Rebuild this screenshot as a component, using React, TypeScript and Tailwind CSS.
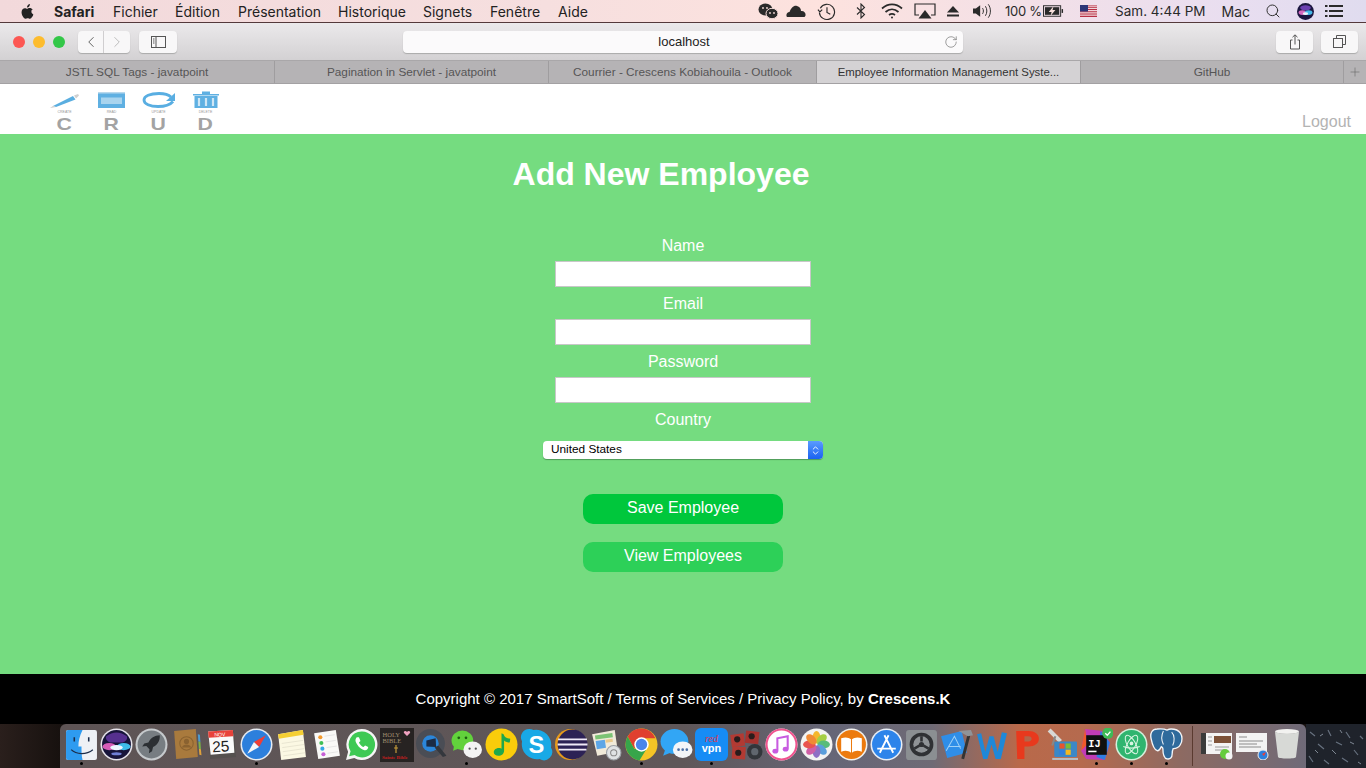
import type { ReactNode } from 'react';
import { ChevronLeft, ChevronRight, ChevronsUpDown, Plus, RotateCw, Search } from 'lucide-react';

const menus = [
  { label: 'Fichier', width: 'w-[62px]' },
  { label: 'Édition', width: 'w-[63px]' },
  { label: 'Présentation', width: 'w-[100px]' },
  { label: 'Historique', width: 'w-[85px]' },
  { label: 'Signets', width: 'w-[67px]' },
  { label: 'Fenêtre', width: 'w-[68px]' },
  { label: 'Aide', width: 'w-[40px]' },
];

const tabs = [
  { title: 'JSTL SQL Tags - javatpoint', width: 'w-[275px]' },
  { title: 'Pagination in Servlet - javatpoint', width: 'w-[274px]' },
  { title: 'Courrier - Crescens Kobiahouila - Outlook', width: 'w-[268px]' },
  { title: 'Employee Information Management Syste...', width: 'w-[264px]', active: true },
  { title: 'GitHub', width: 'w-[263px]' },
];

const Ico = ({ children }: { children: ReactNode }) => (
  <svg viewBox="0 0 32 32" className="w-[33px] h-[33px]">{children}</svg>
);

const Apple = () => (
  <svg viewBox="0 0 14 16" className="w-[13px] h-[15px] fill-[#222]">
    <path d="M9.6 0c.1 1-.3 1.9-.8 2.6-.6.7-1.4 1.2-2.3 1.1-.1-.9.3-1.9.8-2.5C7.9.5 8.9.1 9.6 0zM12.7 5.4c-.9.6-1.5 1.5-1.5 2.7 0 1.4.8 2.4 2.1 3-.3 1-.8 2-1.4 2.9-.6.9-1.3 1.8-2.3 1.8-.9 0-1.3-.6-2.4-.6s-1.5.6-2.4.6c-1 0-1.7-.9-2.4-1.9C1.3 12.5.6 10.5.6 8.7c0-2.8 1.800-4.300 3.600-4.300 1 0 1.800.7 2.400.7.600 0 1.500-.8 2.700-.8.800 0 2.400.2 3.400 2.100z" />
  </svg>
);

const StatusIcons = () => (
  <div className="flex items-center h-full">
    <svg viewBox="0 0 20 16" className="ml-[7px] w-[20px] h-[16px] fill-[#2a2a2a]">
      <ellipse cx="7.5" cy="6.5" rx="7" ry="6" />
      <ellipse cx="14" cy="10.5" rx="6" ry="5.2" stroke="#f8dedc" />
      <circle cx="12" cy="10" r=".9" fill="#f8dedc" /><circle cx="16" cy="10" r=".9" fill="#f8dedc" />
      <circle cx="5" cy="5" r=".9" fill="#f8dedc" /><circle cx="9" cy="5" r=".9" fill="#f8dedc" />
    </svg>
    <svg viewBox="0 0 20 14" className="ml-[8px] w-[20px] h-[14px] fill-[#2a2a2a]">
      <path d="M1 13c-1.500-2 0-5 2.500-5C5 4 8 1 11 2c2.500.5 4 2.500 4 5 3-.5 5 2 4.500 4.500-.2.9-.8 1.500-1.500 1.500z" />
    </svg>
    <svg viewBox="0 0 20 20" className="ml-[11px] w-[19px] h-[19px] fill-none stroke-[#2a2a2a] stroke-[1.2]">
      <path d="M3.5 6.5a8 8 0 1 1-1 4.500" /><path d="M1 8l2 2.500L5.500 8" /><path d="M10.500 5.500V11l3.500 2" />
    </svg>
    <svg viewBox="0 0 10 16" className="ml-[20px] w-[10px] h-[16px] fill-none stroke-[#2a2a2a] stroke-[1.1]">
      <path d="M1 4.500l7.500 7L5 15V1l3.500 3.500L1 11.500" />
    </svg>
    <svg viewBox="0 0 22 16" className="ml-[15px] w-[22px] h-[16px] fill-none stroke-[#2a2a2a] stroke-[1.7]">
      <path d="M1 5.500c6-5.500 14-5.500 20 0" /><path d="M4.500 9c4-3.500 9-3.500 13 0" /><path d="M8 12c2-1.500 4-1.500 6 0" />
      <circle cx="11" cy="14.5" r="1" fill="#2a2a2a" stroke="none" />
    </svg>
    <svg viewBox="0 0 22 16" className="ml-[11px] w-[22px] h-[16px]">
      <path d="M5 12H1V1h20v11h-4" fill="none" stroke="#2a2a2a" strokeWidth="1.2" />
      <path d="M11 7l6.500 8.500h-13z" fill="#2a2a2a" />
    </svg>
    <svg viewBox="0 0 12 11" className="ml-[11px] w-[12px] h-[11px] fill-[#2a2a2a]">
      <path d="M6 0l6 6.500H0z" /><rect y="8.5" width="12" height="2" />
    </svg>
    <svg viewBox="0 0 22 16" className="ml-[14px] w-[21px] h-[16px] fill-none stroke-[#2a2a2a]">
      <path d="M0 5.500h3L7.500 2v12L3 10.500H0z" fill="#2a2a2a" stroke="none" />
      <path d="M10 5c1.200 1.800 1.200 4.200 0 6" /><path d="M13 3c2 3 2 7 0 10" /><path d="M16 1c3 4 3 10 0 14" />
    </svg>
    <span className="ml-[11px] pt-[1px] w-[38px] text-[13px] text-[#2a2a2a] whitespace-nowrap tracking-[-0.3px]">100 %</span>
    <svg viewBox="0 0 22 12" className="w-[21px] h-[12px]">
      <rect x=".5" y=".5" width="18" height="11" fill="none" stroke="#2a2a2a" />
      <rect x="2" y="2" width="15" height="8" fill="#2a2a2a" />
      <rect x="19.5" y="4" width="1.5" height="4" fill="#2a2a2a" />
      <path d="M11 1L6 7h3l-1 4 5-6h-3z" fill="#f8e0dc" />
    </svg>
    <svg viewBox="0 0 17 12" className="ml-[16px] w-[17px] h-[12px]">
      <rect width="17" height="12" fill="#fff" />
      <path d="M0 .9h17M0 2.7h17M0 4.5h17M0 6.3h17M0 8.1h17M0 9.9h17M0 11.5h17" stroke="#b3243a" strokeWidth=".95" />
      <rect width="8" height="6.5" fill="#2c3677" />
    </svg>
    <span className="ml-[18px] text-[13.500px] text-[#2a2a2a] whitespace-nowrap">Sam. 4:44 PM</span>
    <span className="ml-[16px] text-[14px] text-[#2a2a2a]">Mac</span>
    <Search className="ml-[15px] w-[16px] h-[16px] text-[#333]" strokeWidth={1.5} />
    <svg viewBox="0 0 16 16" className="ml-[16px] w-[17px] h-[17px]">
      <circle cx="8" cy="8" r="8" fill="#1b1640" />
      <ellipse cx="8" cy="4.5" rx="5" ry="2.5" fill="#6a3fb0" />
      <ellipse cx="5" cy="9" rx="3.5" ry="2.2" fill="#d56bc0" />
      <ellipse cx="11" cy="9" rx="3.5" ry="2.2" fill="#45b8e8" />
      <ellipse cx="8" cy="10" rx="2.5" ry="1.3" fill="#ecf6ff" />
    </svg>
    <svg viewBox="0 0 18 12" className="ml-[11px] mr-[23px] w-[18px] h-[12px] fill-[#2a2a2a]">
      <rect width="2.5" height="2" /><rect x="4" width="14" height="2" />
      <rect y="5" width="2.5" height="2" /><rect x="4" y="5" width="14" height="2" />
      <rect y="10" width="2.5" height="2" /><rect x="4" y="10" width="14" height="2" />
    </svg>
  </div>
);

const CrudLogo = () => {
  const items = [
    {
      letter: 'C', label: 'CREATE',
      icon: (
        <svg viewBox="0 0 32 16" className="w-[32px] h-[16px]">
          <path d="M4 14L24 4l2.500 3.500L7 15z" fill="#5aaee0" />
          <path d="M1 16l3-2 3 1z" fill="#c9c9c9" /><path d="M25 3.500l4-1.500 1 1.500-3 3z" fill="#cfcfcf" />
        </svg>
      ),
    },
    {
      letter: 'R', label: 'READ',
      icon: (
        <svg viewBox="0 0 28 16" className="w-[28px] h-[16px]">
          <rect y="1" width="27" height="15" fill="#5fb0e2" /><rect y="0" width="27" height="1.5" fill="#b9d8ec" />
          <rect x="3" y="5.5" width="21" height="6.5" fill="#a9d4ee" />
        </svg>
      ),
    },
    {
      letter: 'U', label: 'UPDATE',
      icon: (
        <svg viewBox="0 0 34 16" className="w-[34px] h-[16px] fill-none">
          <path d="M29 5C26 2 22 1.500 17 1.500 8 1.500 2 4 2 8c0 4 6 6.500 14 6.500 7 0 12-1.500 15-5" stroke="#59aee2" strokeWidth="2.8" />
          <path d="M33 1v8h-9z" fill="#59aee2" />
        </svg>
      ),
    },
    {
      letter: 'D', label: 'DELETE',
      icon: (
        <svg viewBox="0 0 26 17" className="w-[26px] h-[17px]">
          <path d="M0 3h26v1.500H0zM9 .5h8V3H9z" fill="#5fb0e2" />
          <rect x="1.5" y="5" width="23" height="12" fill="#5fb0e2" />
          <path d="M6 7v8M13 7v8M20 7v8" stroke="#cfe6f5" strokeWidth="2.2" />
        </svg>
      ),
    },
  ];
  return (
    <div className="flex ml-[41px] pt-[6px]">
      {items.map(item => (
        <div key={item.letter} className="w-[47px] flex flex-col items-center">
          <div className="h-[18px] flex items-end">{item.icon}</div>
          <span className="mt-[2px] h-[5px] text-[3.5px] leading-[5px] text-[#999]">{item.label}</span>
          <span className="mt-[1px] text-[17px] leading-[17px] font-bold text-[#a3a3a3] scale-x-[1.25]">{item.letter}</span>
        </div>
      ))}
    </div>
  );
};

const dockIcons: { key: string; dot?: boolean; icon: ReactNode }[] = [
  {
    key: 'finder', dot: true,
    icon: (
      <Ico>
        <rect x="1" y="2" width="30" height="29" rx="2" fill="#eef1f5" />
        <path d="M3 2h14c-3 6-4 11-4 16h3c0 5 0 9 1 13H3a2 2 0 0 1-2-2V4a2 2 0 0 1 2-2z" fill="#2e9bf0" />
        <path d="M9 9v4M23 9v4" stroke="#1c2d4a" strokeWidth="1.5" />
        <path d="M6 21c5 5 15 5 21 0" stroke="#1c2d4a" strokeWidth="1.2" fill="none" />
      </Ico>
    ),
  },
  {
    key: 'siri',
    icon: (
      <Ico>
        <circle cx="16" cy="16" r="15.5" fill="#e5e3ea" /><circle cx="16" cy="16" r="14" fill="#17143a" />
        <path d="M6 8c6-5 14-5 20 0 1 3-1 5-4 6H10C7 13 5 11 6 8z" fill="#56308f" />
        <ellipse cx="9" cy="18" rx="6.5" ry="3.5" fill="#d75cb8" /><ellipse cx="23" cy="18" rx="6.5" ry="3.5" fill="#3dbbe8" />
        <ellipse cx="16" cy="19" rx="6" ry="2.5" fill="#eef6ff" /><ellipse cx="16" cy="25" rx="5" ry="1.5" fill="#6f7fd6" />
      </Ico>
    ),
  },
  {
    key: 'launchpad',
    icon: (
      <Ico>
        <circle cx="16" cy="16" r="15.5" fill="#c6cacd" /><circle cx="16" cy="16" r="13.5" fill="#777d82" />
        <path d="M24 7c-5 0-9 3-11 7l-4 1-2 3 4-.5 3 3-.5 4 3-2 1-4c4-2 7-6 6.500-11.500z" fill="#2b2f33" />
      </Ico>
    ),
  },
  {
    key: 'contacts',
    icon: (
      <Ico>
        <path d="M4 3l21-2 2 27-21 2z" fill="#a97a3d" />
        <path d="M27 6l2 .5.500 7-2-.5z" fill="#4d9bd0" /><path d="M27.500 13l2 .5.500 7-2-.5z" fill="#79b34a" /><path d="M28 20l2 .5.500 6-2-.5z" fill="#e0a23c" />
        <circle cx="16" cy="15" r="6.5" fill="none" stroke="#8a6230" strokeWidth="1" />
        <circle cx="16" cy="13" r="2.5" fill="#8a6230" /><path d="M11.500 19c1-4 8-4 9 0z" fill="#8a6230" />
      </Ico>
    ),
  },
  {
    key: 'calendar',
    icon: (
      <Ico>
        <path d="M3 4l25-1 2 25-25 2z" fill="#55514f" />
        <path d="M3 3.500l24-1.500 1.500 22-23 2z" fill="#fafafa" />
        <path d="M3 3.500l24-1.500.500 6-24 1.500z" fill="#e8423a" />
        <text x="9" y="8" fontSize="5" fill="#fff" fontFamily="Liberation Sans, sans-serif" transform="rotate(-3 15 6)">NOV</text>
        <text x="7" y="23" fontSize="15" fill="#222" fontFamily="Liberation Sans, sans-serif" transform="rotate(-3 15 18)">25</text>
      </Ico>
    ),
  },
  {
    key: 'safari', dot: true,
    icon: (
      <Ico>
        <circle cx="16" cy="16" r="15.5" fill="#e6ebf2" /><circle cx="16" cy="16" r="14" fill="#2c7fdc" />
        <path d="M25 7L13.500 13.500 18.500 18.500z" fill="#ef3e36" /><path d="M7 25l11.500-6.500-5-5z" fill="#f5f6f8" />
      </Ico>
    ),
  },
  {
    key: 'notes',
    icon: (
      <Ico>
        <path d="M3 6l24-4 3 26-24 3z" fill="#fbf8e3" /><path d="M3 6l24-4 .700 4.500-24 4z" fill="#f5cf33" />
        <path d="M6.500 15l21-3M7 19l21-3M7.500 23l21-3M8 27l21-3" stroke="#ddd9c6" strokeWidth=".6" />
      </Ico>
    ),
  },
  {
    key: 'reminders',
    icon: (
      <Ico>
        <path d="M4 5l21-3 4 25-21 3z" fill="#f9f9f7" />
        <circle cx="10" cy="9" r="2" fill="#f39a2e" /><circle cx="11" cy="14.5" r="2" fill="#3fbe55" /><circle cx="12" cy="20" r="2" fill="#35a6e6" /><circle cx="13" cy="25.5" r="2" fill="#c75fd6" />
        <path d="M14 8l10-1.500M15 13.500l10-1.500M16 19l10-1.500M17 24.500l10-1.500" stroke="#ddd" strokeWidth=".7" />
      </Ico>
    ),
  },
  {
    key: 'whatsapp',
    icon: (
      <Ico>
        <path d="M16 1a15 15 0 0 0-13 22L1 31l8-2a15 15 0 1 0 7-28z" fill="#f5f6f5" />
        <path d="M16 3.500a12.500 12.500 0 0 0-10.600 19L4 27.500l5.300-1.400A12.500 12.500 0 1 0 16 3.500z" fill="#3ec954" />
        <path d="M11.500 9c-1.500 1.500-2 3.500 0 6.500 2 3.500 5 5.500 7.500 6 2 .3 3.500-1 3.500-3l-3-1.500-1.500 1.500c-2-.8-3.500-2.300-4.500-4.500l1.500-1.500L13.500 9z" fill="#fff" />
      </Ico>
    ),
  },
  {
    key: 'bible',
    icon: (
      <svg viewBox="0 0 34 34" className="w-[34px] h-[34px]">
        <rect width="34" height="34" fill="#272322" />
        <text x="2.5" y="9" fontSize="6.5" fill="#a08f6f" fontFamily="Liberation Serif, serif">HOLY</text>
        <text x="2.5" y="15" fontSize="6.5" fill="#a08f6f" fontFamily="Liberation Serif, serif">BIBLE</text>
        <path d="M27 8l-3-3c-1-2 2-3 3-1 1-2 4-1 3 1z" fill="#f0a2c0" />
        <path d="M16 17v8M14 20h4" stroke="#c49a3a" strokeWidth="1.2" />
        <text x="2" y="31" fontSize="5" fontWeight="bold" fill="#c51f1f" fontFamily="Liberation Serif, serif">Sainte Bible</text>
      </svg>
    ),
  },
  {
    key: 'quicktime',
    icon: (
      <Ico>
        <circle cx="15" cy="15" r="14" fill="#4a4d55" /><circle cx="15" cy="15" r="8" fill="#2b86d9" />
        <path d="M11 12l9-2 .5 8.500L11 18z" fill="#1b2c46" />
        <path d="M19 19l8 9 3.500-1-8-10z" fill="#34373d" />
      </Ico>
    ),
  },
  {
    key: 'wechat', dot: true,
    icon: (
      <Ico>
        <ellipse cx="12" cy="12" rx="10.5" ry="9.5" fill="#62d23c" />
        <path d="M4 17l-1 5 5-2z" fill="#62d23c" />
        <circle cx="8.5" cy="9.5" r="1.3" fill="#1e5f11" /><circle cx="15.5" cy="9.5" r="1.3" fill="#1e5f11" />
        <ellipse cx="22" cy="21" rx="9" ry="8" fill="#f4f4f4" />
        <circle cx="19" cy="20" r="1.1" fill="#555" /><circle cx="25" cy="20" r="1.1" fill="#555" />
      </Ico>
    ),
  },
  {
    key: 'qqmusic',
    icon: (
      <Ico>
        <circle cx="16" cy="16" r="15.5" fill="#f9cc0b" />
        <path d="M16 5l2 1c1 3 3 4 6.500 4.500l-.5 3.500c-2 0-4-.5-5.500-2v10c0 3-2.500 5-5.500 5-2.500 0-4.500-1.500-4.500-3.500 0-2.500 2.500-4 5-4 .8 0 1.500.1 2.500.5z" fill="#1fa84b" />
      </Ico>
    ),
  },
  {
    key: 'skype',
    icon: (
      <Ico>
        <path d="M9 1a8 8 0 0 0-7 12 14.500 14.500 0 0 0 17 17 8 8 0 0 0 11-11A14.500 14.500 0 0 0 13 2a8 8 0 0 0-4-1z" fill="#19a9e6" />
        <text x="16" y="24" textAnchor="middle" fontSize="23" fontWeight="bold" fill="#fff" fontFamily="Liberation Sans, sans-serif">S</text>
      </Ico>
    ),
  },
  {
    key: 'eclipse',
    icon: (
      <Ico>
        <circle cx="15" cy="16" r="15" fill="#e79a1b" /><circle cx="17" cy="16" r="14.5" fill="#2c2255" />
        <path d="M3 11h28M2.500 16h29M3.500 21h27" stroke="#efeaf8" strokeWidth="1.7" />
      </Ico>
    ),
  },
  {
    key: 'preview',
    icon: (
      <Ico>
        <path d="M2 6l22-4 3 21-20 4z" fill="#f0ead9" />
        <rect x="5" y="6" width="17" height="4" fill="#7cc374" transform="rotate(-8 14 8)" />
        <rect x="6" y="12" width="9" height="8" fill="#5ca6e6" transform="rotate(-8 10 16)" />
        <rect x="15" y="11" width="7" height="3" fill="#e8c98a" transform="rotate(-8 18 12)" />
        <circle cx="23" cy="24" r="7" fill="#dfe2e4" stroke="#9ba0a5" /><circle cx="23" cy="24" r="3" fill="none" stroke="#888" />
      </Ico>
    ),
  },
  {
    key: 'chrome', dot: true,
    icon: (
      <Ico>
        <circle cx="16" cy="16" r="15.5" fill="#f4c426" />
        <path d="M16 .5A15.500 15.500 0 0 0 2.600 8.300L9 20l7-10h13.500A15.500 15.500 0 0 0 16 .5z" fill="#e0402f" />
        <path d="M2.600 8.300A15.500 15.500 0 0 0 14 31.400L21 20l-12 0z" fill="#37a54a" />
        <circle cx="16" cy="16" r="7" fill="#fff" /><circle cx="16" cy="16" r="5.5" fill="#4a85ea" />
      </Ico>
    ),
  },
  {
    key: 'messages',
    icon: (
      <Ico>
        <ellipse cx="14" cy="13" rx="13.5" ry="12" fill="#32a6f5" />
        <path d="M5 21l-2 6 7-3z" fill="#32a6f5" />
        <ellipse cx="22" cy="21" rx="9.5" ry="8" fill="#f3f5f8" />
        <circle cx="18" cy="21" r="1.3" fill="#4a6fa5" /><circle cx="22" cy="21" r="1.3" fill="#4a6fa5" /><circle cx="26" cy="21" r="1.3" fill="#4a6fa5" />
      </Ico>
    ),
  },
  {
    key: 'vpn', dot: true,
    icon: (
      <svg viewBox="0 0 33 33" className="w-[33px] h-[33px]">
        <rect width="33" height="33" rx="6" fill="#168cf5" />
        <text x="16.5" y="14" textAnchor="middle" fontSize="10" fill="#e0364a" fontFamily="Liberation Serif, serif" fontStyle="italic">red</text>
        <text x="16.5" y="24" textAnchor="middle" fontSize="11" fontWeight="bold" fill="#fff" fontFamily="Liberation Sans, sans-serif">vpn</text>
      </svg>
    ),
  },
  {
    key: 'photobooth',
    icon: (
      <Ico>
        <rect x="1" y="6" width="13" height="12" fill="#b23a33" transform="rotate(-8 7 12)" />
        <rect x="15" y="3" width="13" height="12" fill="#a7332f" transform="rotate(6 21 9)" />
        <rect x="2" y="18" width="13" height="12" fill="#b23a33" transform="rotate(4 8 24)" />
        <circle cx="7" cy="11" r="3" fill="#2a1c1c" /><circle cx="21" cy="8" r="3" fill="#2a1c1c" /><circle cx="8" cy="24" r="3" fill="#2a1c1c" />
        <circle cx="24" cy="23" r="7.5" fill="#33363b" /><circle cx="24" cy="23" r="3.5" fill="#60666e" />
      </Ico>
    ),
  },
  {
    key: 'itunes',
    icon: (
      <Ico>
        <circle cx="16" cy="16" r="15.5" fill="#fff" />
        <circle cx="16" cy="16" r="14.5" fill="none" stroke="#f0548f" strokeWidth="2" />
        <path d="M12 22V10l10-2v12" fill="none" stroke="#c85be0" strokeWidth="2" />
        <ellipse cx="10" cy="22.5" rx="2.8" ry="2.3" fill="#c85be0" /><ellipse cx="20" cy="20.5" rx="2.8" ry="2.3" fill="#c85be0" />
      </Ico>
    ),
  },
  {
    key: 'photos',
    icon: (
      <Ico>
        <circle cx="16" cy="16" r="15.5" fill="#f3f3f2" />
        <ellipse cx="16" cy="9" rx="3.8" ry="6" fill="#f4b72c" />
        <ellipse cx="21" cy="11" rx="3.8" ry="6" fill="#a5cf44" transform="rotate(45 21 11)" />
        <ellipse cx="23" cy="16" rx="6" ry="3.8" fill="#58bc7b" />
        <ellipse cx="21" cy="21" rx="3.8" ry="6" fill="#5a9fdc" transform="rotate(-45 21 21)" />
        <ellipse cx="16" cy="23" rx="3.8" ry="6" fill="#8d6fc4" />
        <ellipse cx="11" cy="21" rx="3.8" ry="6" fill="#cf5fa6" transform="rotate(45 11 21)" />
        <ellipse cx="9" cy="16" rx="6" ry="3.8" fill="#e9534f" />
        <ellipse cx="11" cy="11" rx="3.8" ry="6" fill="#f08a35" transform="rotate(-45 11 11)" />
      </Ico>
    ),
  },
  {
    key: 'ibooks',
    icon: (
      <Ico>
        <circle cx="16" cy="16" r="15.5" fill="#f1f1ee" /><circle cx="16" cy="16" r="14" fill="#ec7a0e" />
        <path d="M6 10c4-1.500 7-1 9.500 1v13C13 22 10 21.500 6 23zM26 10c-4-1.500-7-1-9.500 1v13C19 22 22 21.500 26 23z" fill="#fff" />
      </Ico>
    ),
  },
  {
    key: 'appstore',
    icon: (
      <Ico>
        <circle cx="16" cy="16" r="15.5" fill="#e8eef6" /><circle cx="16" cy="16" r="14" fill="#2d84ea" />
        <path d="M18 7L9.500 24M14 7l8.500 17M7 20h18" stroke="#fff" strokeWidth="1.8" fill="none" />
      </Ico>
    ),
  },
  {
    key: 'sysprefs',
    icon: (
      <Ico>
        <rect x="1" y="2" width="30" height="29" rx="3" fill="#8b8f92" />
        <circle cx="16" cy="16" r="11.5" fill="#2f3134" /><circle cx="16" cy="16" r="8" fill="#8f9396" />
        <circle cx="16" cy="16" r="2.5" fill="#2f3134" />
        <path d="M16 8v5M9 20l5-3M23 20l-5-3" stroke="#2f3134" strokeWidth="2.5" />
      </Ico>
    ),
  },
  {
    key: 'xcode',
    icon: (
      <Ico>
        <path d="M1 8l20-5 5 21-19 5z" fill="#2f8ee8" />
        <path d="M6 22L14 8l6 12M8 18h12" stroke="#9fd0f7" strokeWidth="1" fill="none" />
        <path d="M28 7L22 30" stroke="#333" strokeWidth="2.8" /><path d="M18 3l12-1 2 5-5 1z" fill="#8f9499" />
      </Ico>
    ),
  },
  {
    key: 'word',
    icon: (
      <Ico>
        <path d="M2 6l4-1 4 18 4-15 4 0 4 15 4-19 5 1-6 25h-5l-4-14-4 14H8z" fill="#1f88d8" />
      </Ico>
    ),
  },
  {
    key: 'ppt',
    icon: (
      <Ico>
        <path d="M6 3h12c6 0 10 3 10 7.500S24 18 18 18h-4v12H7z" fill="#e8391d" />
        <path d="M14 8v5h4c2 0 3-1 3-2.500S20 8 18 8z" fill="#b4664a" />
      </Ico>
    ),
  },
  {
    key: 'remote',
    icon: (
      <Ico>
        <path d="M4 2l11 11" stroke="#d8d8d4" strokeWidth="4" />
        <path d="M10 8L7 17" stroke="#888" strokeWidth="2" />
        <rect x="9" y="13" width="22" height="15" rx="1" fill="#3b88c6" />
        <rect x="14" y="15" width="5" height="5" fill="#e8542c" /><rect x="20" y="15" width="5" height="5" fill="#7cbb34" />
        <rect x="14" y="21" width="5" height="5" fill="#2f7fe0" /><rect x="20" y="21" width="5" height="5" fill="#f5b81f" />
        <path d="M7 30h26" stroke="#b8bcc0" strokeWidth="2" />
      </Ico>
    ),
  },
  {
    key: 'idea', dot: true,
    icon: (
      <Ico>
        <path d="M5 1l17 2 7 11-5 17-18-1-5-8z" fill="#c23cb5" /><path d="M20 3l9 11-5 17-8-3z" fill="#2f7de1" /><path d="M5 1L1 22l6-6z" fill="#ef5a2a" />
        <rect x="6" y="7" width="20" height="19" fill="#101010" />
        <text x="8" y="18" fontSize="10" fontWeight="bold" fill="#fff" fontFamily="Liberation Mono, monospace">IJ</text>
        <rect x="8" y="22" width="8" height="1.5" fill="#fff" />
        <circle cx="27" cy="5" r="5.5" fill="#3dbb57" /><path d="M24.500 5l2 2 3-3.500" stroke="#fff" strokeWidth="1.3" fill="none" />
      </Ico>
    ),
  },
  {
    key: 'atom', dot: true,
    icon: (
      <Ico>
        <circle cx="16" cy="16" r="15.5" fill="#d4f0dc" /><circle cx="16" cy="16" r="14" fill="#2fb56f" />
        <g fill="none" stroke="#d9f4e2" strokeWidth="1">
          <ellipse cx="16" cy="16" rx="10" ry="4" transform="rotate(60 16 16)" />
          <ellipse cx="16" cy="16" rx="10" ry="4" transform="rotate(-60 16 16)" />
          <path d="M8 18c4 2 12 2 16 0" />
        </g>
        <circle cx="16" cy="15" r="1.8" fill="#d9f4e2" />
      </Ico>
    ),
  },
  {
    key: 'postgres', dot: true,
    icon: (
      <Ico>
        <path d="M7 1c-5 0-7 4-6 9 1 5 3 11 6 12 2 .5 3-2 4-4 1 .5 1.500 1 1.500 2 0 4 .5 9 4 10 3 .5 5-1 5-5 0-2 0-3 1-5 3 0 6-2 7-4 2-3 2-8 0-11-2-3-6-4-9-4-2 0-3 .5-4 1-2-1-4-1.500-9.500-1z" fill="#2f6a9c" stroke="#f2f5f8" strokeWidth="1.3" />
        <path d="M13 3c-2 4-2 9 0 13M21 4c3 3 3 9 1 13" stroke="#f2f5f8" strokeWidth="1" fill="none" />
      </Ico>
    ),
  },
];

const Thumb = ({ variant }: { variant: 'wechat' | 'safari' }) => (
  <svg viewBox="0 0 34 32" className="w-[34px] h-[32px]">
    <rect x="1" y="5" width="31" height={variant === 'wechat' ? 21 : 19} fill="#f3f3f3" />
    {variant === 'wechat' ? (
      <>
        <rect x="1" y="5" width="5" height="21" fill="#3a3a3a" />
        <rect x="14" y="8" width="17" height="7" fill="#7d5238" />
        <path d="M8 9h4M8 13h4M8 17h4M15 19h14M15 22h10" stroke="#999" />
        <circle cx="25" cy="26" r="5" fill="#66cc3d" /><circle cx="29" cy="28" r="3.5" fill="#f4f4f4" />
      </>
    ) : (
      <>
        <path d="M4 9h8M4 13h24M4 16h18M4 19h22" stroke="#8c8c8c" strokeWidth="1.2" />
        <circle cx="28" cy="27" r="5" fill="#2c7fdc" stroke="#eee" /><path d="M31 24l-4 2 2 2z" fill="#ef3e36" />
      </>
    )}
  </svg>
);

const Trash = () => (
  <svg viewBox="0 0 26 32" className="w-[26px] h-[32px]">
    <ellipse cx="13" cy="3.5" rx="12" ry="2.5" fill="#f2f2f0" />
    <path d="M1 4l3 25c.3 2 17.700 2 18 0l3-25c-4 2-20 2-24 0z" fill="#d7d9d6" />
  </svg>
);

const DockItem = ({ dot, children }: { dot?: boolean; children: ReactNode }) => (
  <div className="relative w-[35px] h-full flex justify-center pt-[4px] shrink-0">
    {children}
    {dot && <span className="absolute bottom-[3px] left-[16px] w-[3px] h-[3px] rounded-full bg-black" />}
  </div>
);

// the bit of wallpaper that shows to the right of the dock
const Wallpaper = () => (
  <svg viewBox="0 0 60 44" className="w-[60px] h-[44px] shrink-0">
    <rect width="60" height="44" fill="#1f232b" />
    <g stroke="#66707e" strokeWidth="1.2" fill="none">
      <path d="M4 8l5 4M12 20l6 5M3 32l4 6M22 6l3 6M30 18l6 3M18 36l5 4M40 8l4 6M48 26l4 5M36 34l6 4M54 12l3 3" />
    </g>
    <g stroke="#98a2ae" strokeWidth=".8" fill="none">
      <path d="M9 26l3 3M26 26l4 4M44 18l4 2M14 12l3-2M34 6l2 3M52 38l3 2" />
    </g>
  </svg>
);

const Dock = () => (
  <div className="h-[44px] flex bg-[linear-gradient(90deg,#2a1f1c_0px,#17110f_60px)] overflow-hidden">
    <div className="ml-[60px] w-[1246px] pl-[4px] flex rounded-t-[6px] bg-[linear-gradient(90deg,#5e5455_0%,#5f5759_50%,#666677_62%,#6f6a75_70%,#b9694a_77%,#b56a4e_82%,#8d6a62_90%,#6f6a78_100%)]">
      {dockIcons.map(item => (
        <DockItem key={item.key} dot={item.dot}>{item.icon}</DockItem>
      ))}
      <div className="ml-[8px] mr-[6px] my-[2px] w-px bg-[#5a3a30]" />
      <DockItem><Thumb variant="wechat" /></DockItem>
      <DockItem><Thumb variant="safari" /></DockItem>
      <DockItem><Trash /></DockItem>
    </div>
    <Wallpaper />
  </div>
);

const fieldLabel = 'h-[32px] pt-[2px] flex items-center justify-center text-white text-[16px]';
const fieldInput = 'block w-[256px] h-[26px] bg-white border border-[#c8c8c8] outline-none';

export default function App() {
  return (
    <div className="w-[1366px] h-[768px] overflow-hidden flex flex-col font-['Liberation_Sans',sans-serif]">
      {/* macOS menu bar */}
      <div className="h-[23px] shrink-0 flex items-center justify-between border-b border-[#54393b] bg-[linear-gradient(90deg,#f2d9db_0%,#f6dfdf_40%,#fde2de_60%,#e9def0_90%,#e0dcef_100%)] font-['Inter',sans-serif]">
        <div className="flex items-center">
          <div className="ml-[21px] w-[33px]"><Apple /></div>
          <span className="w-[59px] text-[14px] font-bold text-[#222]">Safari</span>
          {menus.map(m => (
            <span key={m.label} className={`${m.width} text-[14px] text-[#222] whitespace-nowrap`}>{m.label}</span>
          ))}
        </div>
        <StatusIcons />
      </div>

      {/* Safari toolbar */}
      <div className="h-[38px] shrink-0 flex items-center bg-[linear-gradient(180deg,#ebe9eb,#d3d1d3)] border-b border-[#a9a7a9]">
        <div className="ml-[13px] flex gap-[8px]">
          <span className="w-[12px] h-[12px] rounded-full bg-[#fc5753]" />
          <span className="w-[12px] h-[12px] rounded-full bg-[#fdbc2e]" />
          <span className="w-[12px] h-[12px] rounded-full bg-[#33c748]" />
        </div>
        <div className="ml-[13px] flex h-[22px] w-[52px] rounded-[4px] bg-[#f8f7f8] shadow-[0_1px_1px_#aaa]">
          <div className="w-[26px] flex items-center justify-center border-r border-[#d0ced0]"><ChevronLeft className="w-[18px] h-[18px] text-[#555]" strokeWidth={1.2} /></div>
          <div className="w-[26px] flex items-center justify-center"><ChevronRight className="w-[18px] h-[18px] text-[#b5b5b5]" strokeWidth={1.2} /></div>
        </div>
        <div className="ml-[9px] w-[38px] h-[22px] flex items-center justify-center rounded-[4px] bg-[#f8f7f8] shadow-[0_1px_1px_#aaa]">
          <svg viewBox="0 0 15 12" className="w-[15px] h-[12px] fill-none stroke-[#555]">
            <rect x=".5" y=".5" width="14" height="11" /><path d="M5 .5v11M2 3h1.500M2 5h1.500M2 7h1.500" />
          </svg>
        </div>
        <div className="relative ml-[226px] w-[560px] h-[22px] flex items-center justify-center rounded-[4px] bg-[#fbfafb] shadow-[0_1px_1px_#aaa] text-[13px] text-[#222]">
          <span className="pl-[2px]">localhost</span>
          <RotateCw className="absolute right-[5px] top-[4px] w-[14px] h-[14px] text-[#777]" strokeWidth={1.2} />
        </div>
        <div className="ml-auto flex gap-[8px] mr-[8px]">
          <div className="w-[37px] h-[22px] flex items-center justify-center rounded-[4px] bg-[#f8f7f8] shadow-[0_1px_1px_#aaa]">
            <svg viewBox="0 0 12 16" className="w-[12px] h-[16px] fill-none stroke-[#555]">
              <path d="M3.500 6H1.500v9h9V6H8.500M6 10.500V1M3.500 3.200L6 .8l2.500 2.400" />
            </svg>
          </div>
          <div className="w-[37px] h-[22px] flex items-center justify-center rounded-[4px] bg-[#f8f7f8] shadow-[0_1px_1px_#aaa]">
            <svg viewBox="0 0 13 13" className="w-[13px] h-[13px] fill-none stroke-[#555]">
              <rect x=".5" y="3.5" width="9" height="9" /><path d="M3.500 3.500v-3h9v9h-3" />
            </svg>
          </div>
        </div>
      </div>

      {/* tabs */}
      <div className="h-[23px] shrink-0 flex bg-[#b5b3b5] border-b border-[#a3a1a3] leading-[22px]">
        {tabs.map(t => (
          <div key={t.title} className={`${t.width} text-center border-r border-[#9f9d9f] whitespace-nowrap ${t.active ? 'bg-[#d4d2d4] text-[#333] text-[11.4px]' : 'text-[#555] text-[11.8px]'}`}>
            {t.title}
          </div>
        ))}
        <div className="flex-1 flex items-center justify-center">
          <Plus className="w-[14px] h-[14px] text-[#666]" strokeWidth={1} />
        </div>
      </div>

      {/* page header */}
      <header className="h-[50px] shrink-0 flex justify-between bg-white">
        <CrudLogo />
        <a className="self-end mr-[15px] text-[16px] text-[#b3b3b3]">Logout</a>
      </header>

      {/* form */}
      <main className="h-[540px] shrink-0 flex flex-col items-center bg-[#75dc80]">
        <h1 className="w-full pr-[44px] pt-[22px] text-center text-[32px] leading-[37px] font-bold text-white">Add New Employee</h1>
        <form className="mt-[36px] flex flex-col items-center">
          <label className={fieldLabel}>Name</label>
          <input className={fieldInput} type="text" />
          <label className={fieldLabel}>Email</label>
          <input className={fieldInput} type="email" />
          <label className={fieldLabel}>Password</label>
          <input className={fieldInput} type="password" />
          <label className={fieldLabel}>Country</label>
          <div className="relative mt-[6px] w-[280px] h-[18px]">
            <select className="block w-full h-full appearance-none pl-[8px] bg-white rounded-[4px] text-[11.8px] text-black shadow-[0_1px_1px_#4f9a58] outline-none">
              <option>United States</option>
            </select>
            <span className="absolute right-0 top-0 w-[15px] h-[18px] flex items-center justify-center rounded-r-[4px] bg-[linear-gradient(180deg,#5b9bff,#1a62f0)]">
              <ChevronsUpDown className="w-[11px] h-[11px] text-white" strokeWidth={2} />
            </span>
          </div>
          <button type="button" className="mt-[35px] w-[200px] h-[30px] pb-[2px] rounded-[10px] bg-[#00c73c] text-white text-[16px]">Save Employee</button>
          <button type="button" className="mt-[18px] w-[200px] h-[30px] pb-[2px] rounded-[10px] bg-[#2dd058] text-white text-[16px]">View Employees</button>
        </form>
      </main>

      {/* footer */}
      <footer className="h-[50px] shrink-0 flex items-center justify-center bg-black text-white text-[15px]">
        <span>Copyright © 2017 SmartSoft / Terms of Services / Privacy Policy, by <b>Crescens.K</b></span>
      </footer>

      <Dock />
    </div>
  );
}
